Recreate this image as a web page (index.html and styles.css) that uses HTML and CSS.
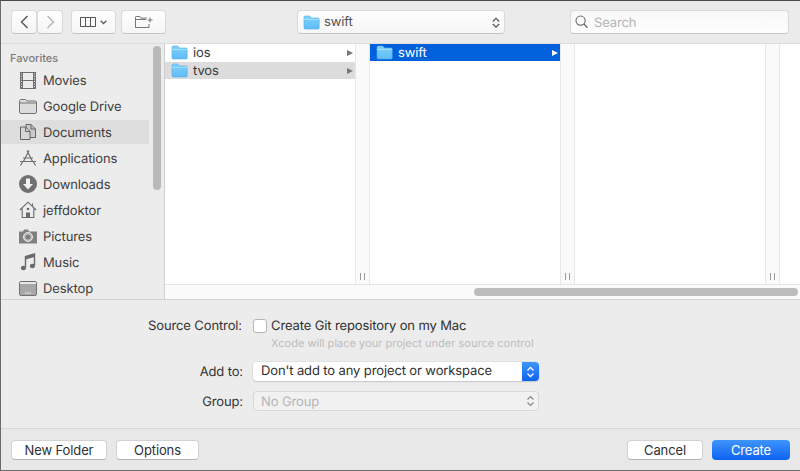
FILE: index.html
```html
<!DOCTYPE html>
<html lang="en">
  <head>
    <meta charset="UTF-8" />
    <title>Save dialog</title>
    <link rel="stylesheet" href="styles.css">
  </head>
  <body>
    <svg class="defs" width="0" height="0">
      <defs>
        <linearGradient id="folderFill" x1="0" y1="0" x2="0" y2="1">
          <stop offset="0" stop-color="#7fd0fb" />
          <stop offset="1" stop-color="#5fbdf5" />
        </linearGradient>
        <symbol id="folder" viewBox="0 0 17 15">
          <path d="M1 2.500C1 1.600 1.500 1 2.400 1h3.800c.7 0 1 .3 1.400 .8L8.400 3H15c.7 0 1.200 .5 1.200 1.200v8.600c0 .8-.5 1.200-1.200 1.200H2.200C1.500 14 1 13.600 1 12.800z" fill="url(#folderFill)" stroke="#53aee6" stroke-width=".6" />
          <path d="M1 4.400h15.200" stroke="#a5e0fd" stroke-width="1" />
        </symbol>
      </defs>
    </svg>
    <div class="window">
      <header class="toolbar">
        <div class="nav-group">
          <button class="tool-btn nav-btn">
            <svg width="9" height="14" viewBox="0 0 9 14"><path d="M7.500 1 1.500 7l6 6" fill="none" stroke="#555" stroke-width="1.400" /></svg>
          </button>
          <button class="tool-btn nav-btn">
            <svg width="9" height="14" viewBox="0 0 9 14"><path d="M1.500 1l6 6-6 6" fill="none" stroke="#b4b4b4" stroke-width="1.400" /></svg>
          </button>
        </div>
        <button class="tool-btn view-btn">
          <svg width="16" height="10" viewBox="0 0 16 10"><path d="M.5 .5h15v9H.5zM5.500 .5v9M10.500 .5v9" fill="none" stroke="#555" /></svg>
          <svg width="7" height="5" viewBox="0 0 7 5"><path d="M.7 .8 3.500 3.600 6.300 .8" fill="none" stroke="#555" stroke-width="1.300" /></svg>
        </button>
        <button class="tool-btn newfolder-btn">
          <svg width="18" height="12" viewBox="0 0 18 12"><path d="M.5 1.200C.5 .8 .8 .5 1.200 .5h3.600l1.100 1.600H12M.5 1.200v10.300h13.500V8M.5 3.500H11M15 1.500v5M12.500 4h5" fill="none" stroke="#666" stroke-width=".9" /></svg>
        </button>
        <div class="path-select">
          <svg class="folder-icon" width="17" height="15"><use href="#folder" /></svg>
          <span class="path-name">swift</span>
          <svg class="updown" width="8" height="13" viewBox="0 0 8 13"><path d="M.8 5.500 4 2.300l3.200 3.200M.8 8 4 11.200 7.200 8" fill="none" stroke="#555" stroke-width="1.200" /></svg>
        </div>
        <div class="search">
          <svg width="13" height="14" viewBox="0 0 13 14"><circle cx="5.600" cy="5.600" r="4.600" fill="none" stroke="#666" stroke-width="1.100" /><path d="M9 9l3.400 3.800" stroke="#666" stroke-width="1.300" /></svg>
          <span class="search-text">Search</span>
        </div>
      </header>

      <div class="browser">
        <aside class="sidebar">
          <div class="side-list">
            <div class="side-title">Favorites</div>
            <div class="side-item">
              <div class="side-icon"><svg viewBox="0 0 16 17" width="16" height="17"><path d="M0 0h16v17H0z" fill="#6f6f6f" /><path d="M3 1h10v7H3zM3 9h10v7H3z" fill="#ececec" /><path d="M1 2h1M1 4.500h1M1 7h1M1 9.500h1M1 12h1M1 14.500h1M14 2h1M14 4.500h1M14 7h1M14 9.500h1M14 12h1M14 14.500h1" stroke="#ececec" /></svg></div>
              <span class="side-text">Movies</span>
            </div>
            <div class="side-item">
              <div class="side-icon"><svg viewBox="0 0 18 15" width="18" height="15"><path d="M.5 2C.5 1 1 .5 2 .5h4.500L8 2h8.500c.6 0 1 .4 1 1v10c0 .8-.5 1.500-1.300 1.500H1.800C1 14.500 .5 13.800 .5 13z" fill="#dcdcdc" stroke="#757575" /><path d="M.5 4h17" stroke="#757575" /></svg></div>
              <span class="side-text">Google Drive</span>
            </div>
            <div class="side-item active">
              <div class="side-icon"><svg viewBox="0 0 16 16" width="16" height="16"><path d="M6 .5h5L15.500 5v8.500H6z" fill="#c9c9c9" stroke="#666" /><path d="M.5 3h5L10 7.500v8H.5z" fill="#d6d6d6" stroke="#666" /><path d="M5.500 3v4.500H10M11 .5V5h4.500" fill="none" stroke="#666" /></svg></div>
              <span class="side-text">Documents</span>
            </div>
            <div class="side-item">
              <div class="side-icon"><svg viewBox="0 0 18 18" width="18" height="18"><path d="M8 1.500 13.800 13M10 1.500 4.200 13M1 12.500h16M4 9h10M3.500 13l-2 3.500M14.500 13l2 3.500" fill="none" stroke="#6e6e6e" stroke-width="1.200" /></svg></div>
              <span class="side-text">Applications</span>
            </div>
            <div class="side-item">
              <div class="side-icon"><svg viewBox="0 0 18 18" width="18" height="18"><circle cx="9" cy="9" r="9" fill="#707070" /><path d="M7 3.500h4V9h3l-5 5.500L4 9h3z" fill="#f2f2f2" /></svg></div>
              <span class="side-text">Downloads</span>
            </div>
            <div class="side-item">
              <div class="side-icon"><svg viewBox="0 0 18 18" width="18" height="18"><path d="M.8 9 9 1.200 17.200 9M13.500 2.500v3M3.200 7.500V16.500h11.600V7.500" fill="none" stroke="#6a6a6a" stroke-width="1.100" /><path d="M7 16.500v-5h4v5" fill="#6a6a6a" /><circle cx="9" cy="8" r="1.300" fill="#6a6a6a" /></svg></div>
              <span class="side-text">jeffdoktor</span>
            </div>
            <div class="side-item">
              <div class="side-icon"><svg viewBox="0 0 18 15" width="18" height="15"><path d="M0 2.500h4L5 .5h4l1 2h8V14.500H0z" fill="#808080" /><circle cx="9" cy="8" r="4.500" fill="#bdbdbd" stroke="#e8e8e8" /><circle cx="9" cy="8" r="2.500" fill="#808080" /></svg></div>
              <span class="side-text">Pictures</span>
            </div>
            <div class="side-item">
              <div class="side-icon"><svg viewBox="0 0 16 18" width="16" height="18"><path d="M5.500 14.500V3.500L14.500 1v11.500" fill="none" stroke="#6a6a6a" stroke-width="1.400" /><path d="M5.500 3.500 14.500 1v3L5.500 6.500z" fill="#6a6a6a" /><ellipse cx="3.400" cy="15" rx="2.600" ry="2.200" fill="#6a6a6a" /><ellipse cx="12.400" cy="13" rx="2.600" ry="2.200" fill="#6a6a6a" /></svg></div>
              <span class="side-text">Music</span>
            </div>
            <div class="side-item">
              <div class="side-icon"><svg viewBox="0 0 18 15" width="18" height="15"><rect x=".5" y=".5" width="17" height="14" rx="1.500" fill="#a8a8a8" stroke="#707070" /><path d="M1 1h16v2H1z" fill="#e6e6e6" /><path d="M6 12h1.500M8.300 12h1.500M10.600 12h1.500" stroke="#f2f2f2" /></svg></div>
              <span class="side-text">Desktop</span>
            </div>
          </div>
          <div class="side-scroll"><div class="side-thumb"></div></div>
        </aside>

        <div class="files">
          <div class="columns">
            <section class="column">
              <div class="file-row">
                <svg class="folder-icon" width="17" height="15"><use href="#folder" /></svg>
                <span class="file-name">ios</span>
                <i class="arrow"></i>
              </div>
              <div class="file-row parent">
                <svg class="folder-icon" width="17" height="15"><use href="#folder" /></svg>
                <span class="file-name">tvos</span>
                <i class="arrow"></i>
              </div>
            </section>
            <div class="handle"><span class="grip"></span></div>
            <section class="column">
              <div class="file-row selected">
                <svg class="folder-icon" width="17" height="15"><use href="#folder" /></svg>
                <span class="file-name">swift</span>
                <i class="arrow"></i>
              </div>
            </section>
            <div class="handle"><span class="grip"></span></div>
            <section class="column"></section>
            <div class="handle"><span class="grip"></span></div>
            <section class="column last"></section>
          </div>
          <div class="hscroll"><div class="hthumb"></div></div>
        </div>
      </div>

      <main class="options">
        <div class="opt-row git-row">
          <label class="opt-label">Source Control:</label>
          <div class="check-wrap">
            <span class="checkbox"></span>
            <span>Create Git repository on my Mac</span>
          </div>
        </div>
        <div class="opt-row hint-row">
          <span class="opt-label"></span>
          <span class="hint">Xcode will place your project under source control</span>
        </div>
        <div class="opt-row addto-row">
          <label class="opt-label">Add to:</label>
          <div class="popup">
            <span class="popup-text">Don't add to any project or workspace</span>
            <span class="popup-arrows">
              <svg width="9" height="14" viewBox="0 0 9 14"><path d="M1.500 5.500 4.500 2.500l3 3M1.500 8.500l3 3 3-3" fill="none" stroke="#fff" stroke-width="1.300" /></svg>
            </span>
          </div>
        </div>
        <div class="opt-row group-row">
          <label class="opt-label">Group:</label>
          <div class="popup disabled">
            <span class="popup-text">No Group</span>
            <svg width="9" height="14" viewBox="0 0 9 14"><path d="M1.500 5.500 4.500 2.500l3 3M1.500 8.500l3 3 3-3" fill="none" stroke="#888" stroke-width="1.200" /></svg>
          </div>
        </div>
      </main>

      <footer class="footer">
        <button class="btn newfolder">New Folder</button>
        <button class="btn options-btn">Options</button>
        <span class="spacer"></span>
        <button class="btn cancel-btn">Cancel</button>
        <button class="btn primary">Create</button>
      </footer>
    </div>
  </body>
</html>
```

FILE: styles.css
```css
* {
  box-sizing: border-box;
}
html,
body {
  margin: 0;
  padding: 0;
}
body {
  width: 800px;
  height: 471px;
  overflow: hidden;
  font-family: Inter, "Liberation Sans", sans-serif;
  font-size: 13px;
  letter-spacing: -0.12px;
  text-rendering: geometricPrecision;
  color: #2f2f2f;
  background-color: #ececec;
}
button {
  font: inherit;
  letter-spacing: inherit;
  color: inherit;
  padding: 0;
}
svg {
  display: block;
  flex: none;
}
.defs {
  position: absolute;
}
.window {
  width: 800px;
  height: 471px;
  display: flex;
  flex-direction: column;
  border-top: 1px solid #4a4a4a;
  border-left: 1px solid #6a6a6a;
  border-bottom: 1px solid #6a6a6a;
}

/* toolbar */
.toolbar {
  height: 43px;
  flex: none;
  display: flex;
  align-items: flex-start;
  padding: 9px 10px 0 10px;
  background-color: #ebebeb;
  border-bottom: 1px solid #dcdcdc;
}
.nav-group {
  display: flex;
}
.tool-btn {
  height: 24px;
  display: flex;
  align-items: center;
  justify-content: center;
  background: linear-gradient(#fefefe, #f6f6f6);
  border: 1px solid #dadada;
  border-bottom-color: #c6c6c6;
  border-radius: 4px;
}
.nav-btn {
  width: 26px;
}
.view-btn {
  width: 45px;
  gap: 4px;
  margin-left: 8px;
}
.newfolder-btn {
  width: 45px;
  margin-left: 5px;
}
.path-select {
  width: 208px;
  height: 24px;
  margin-left: 131px;
  padding: 0 4px 0 5px;
  display: flex;
  align-items: center;
  background: linear-gradient(#fefefe, #f6f6f6);
  border: 1px solid #dadada;
  border-bottom-color: #c6c6c6;
  border-radius: 4px;
}
.path-name {
  margin-left: 4px;
  color: #555;
  flex: 1;
}
.search {
  width: 219px;
  height: 24px;
  margin-left: 65px;
  padding-left: 4px;
  display: flex;
  align-items: center;
  gap: 5px;
  color: #b4b4b4;
  background: linear-gradient(#f8f8f8, #fdfdfd);
  border: 1px solid #d8d8d8;
  border-bottom-color: #c8c8c8;
  border-radius: 4px;
}
.search-text {
  padding-top: 2px;
  margin-left: 1px;
}

/* sidebar + column browser */
.browser {
  height: 256px;
  flex: none;
  display: flex;
  border-bottom: 1px solid #d2d2d2;
}
.sidebar {
  width: 164px;
  flex: none;
  display: flex;
  overflow: hidden;
  background-color: #ececec;
  border-right: 1px solid #d0d0d0;
}
.side-list {
  width: 148px;
  flex: none;
  padding-top: 6px;
}
.side-title {
  height: 17px;
  line-height: 16px;
  padding-left: 9px;
  font-size: 11px;
  font-weight: 500;
  letter-spacing: 0;
  color: #7b7b7b;
}
.side-item {
  height: 26px;
  display: flex;
  align-items: center;
  gap: 6px;
  padding-left: 18px;
  color: #3e3e3e;
}
.side-text {
  padding-top: 2px;
}
.side-icon {
  width: 18px;
  display: flex;
  justify-content: center;
}
.side-item.active {
  height: 24px;
  margin: 1px 0;
  background-color: #dedede;
}
.side-scroll {
  flex: 1;
  padding: 2px 2px 0 4px;
}
.side-thumb {
  width: 8px;
  height: 144px;
  border-radius: 4px;
  background-color: #b9b9b9;
}
.files {
  flex: 1;
  min-width: 0;
  display: flex;
  flex-direction: column;
  background-color: #fff;
}
.columns {
  flex: 1;
  display: flex;
  min-height: 0;
}
.column {
  width: 190px;
  flex: none;
}
.column.last {
  flex: 1;
  width: auto;
}
.handle {
  width: 15px;
  flex: none;
  display: flex;
  align-items: flex-end;
  justify-content: center;
  padding-bottom: 4px;
  background-color: #fafafa;
  border-left: 1px solid #e8e8e8;
  border-right: 1px solid #e8e8e8;
}
.grip {
  width: 5px;
  height: 7px;
  border-left: 1px solid #9b9b9b;
  border-right: 1px solid #9b9b9b;
}
.file-row {
  height: 17px;
  margin-bottom: 1px;
  display: flex;
  align-items: center;
  padding: 0 2px 0 6px;
  color: #3a3a3a;
}
.file-row.parent {
  background-color: #dcdcdc;
}
.file-row.selected {
  background-color: #0161dd;
  color: #fff;
}
.file-name {
  flex: 1;
  margin-left: 5px;
}
.arrow {
  width: 0;
  height: 0;
  border-left: 6px solid #777;
  border-top: 3.5px solid transparent;
  border-bottom: 3.5px solid transparent;
}
.selected .arrow {
  border-left-color: #fff;
}
.hscroll {
  height: 15px;
  flex: none;
  padding: 3px 2px 0 309px;
  background-color: #fafafa;
  border-top: 1px solid #e6e6e6;
}
.hthumb {
  height: 8px;
  border-radius: 4px;
  background-color: #bdbdbd;
}

/* form area */
.options {
  height: 129px;
  flex: none;
  padding-top: 17px;
  background-color: #ececec;
  border-bottom: 1px solid #d6d6d6;
}
.opt-row {
  display: flex;
  align-items: center;
}
.opt-label {
  width: 241px;
  flex: none;
  text-align: right;
  color: #333;
}
.addto-row .opt-label,
.group-row .opt-label {
  width: 242px;
}
.group-row .opt-label {
  padding-top: 2px;
}
.git-row {
  height: 17px;
}
.check-wrap {
  display: flex;
  align-items: center;
  gap: 4px;
  margin-left: 11px;
}
.checkbox {
  width: 14px;
  height: 14px;
  background-color: #fff;
  border: 1px solid #b5b5b5;
  border-radius: 3px;
}
.hint-row {
  height: 18px;
}
.hint {
  margin-left: 29px;
  font-size: 11px;
  letter-spacing: 0.02px;
  color: #bcbcbc;
}
.addto-row {
  height: 19px;
  margin-top: 10px;
}
.popup {
  width: 286px;
  height: 19px;
  margin-left: 10px;
  padding-left: 8px;
  display: flex;
  align-items: center;
  background-color: #fff;
  border-radius: 4px;
  box-shadow: 0 0 0 0.5px #d4d4d4, 0 1px 1px #bcbcbc;
  overflow: hidden;
}
.popup-text {
  flex: 1;
  margin-top: -1px;
}
.popup-arrows {
  width: 17px;
  height: 19px;
  display: flex;
  align-items: center;
  justify-content: center;
  background: linear-gradient(#3f96fb, #0f62f0);
}
.group-row {
  height: 20px;
  margin-top: 10px;
}
.popup.disabled {
  height: 20px;
  padding-right: 4px;
  background-color: #f1f1f1;
  color: #b5b5b5;
  box-shadow: inset 0 0 0 1px #d8d8d8;
}
.popup.disabled .popup-text {
  margin-top: 2px;
}

/* bottom buttons */
.footer {
  flex: 1;
  display: flex;
  align-items: center;
  padding: 0 10px;
  background-color: #e8e8e8;
}
.btn {
  height: 20px;
  padding: 0;
  width: 83px;
  background-color: #fff;
  border: 1px solid #d2d2d2;
  border-bottom-color: #b4b4b4;
  border-radius: 4px;
}
.newfolder {
  width: 96px;
}
.options-btn {
  margin-left: 9px;
}
.spacer {
  flex: 1;
}
.cancel-btn {
  width: 76px;
}
.primary {
  width: 78px;
  margin-left: 9px;
  color: #fff;
  border: none;
  background: linear-gradient(#3f95fb, #0e63f0);
}
```
